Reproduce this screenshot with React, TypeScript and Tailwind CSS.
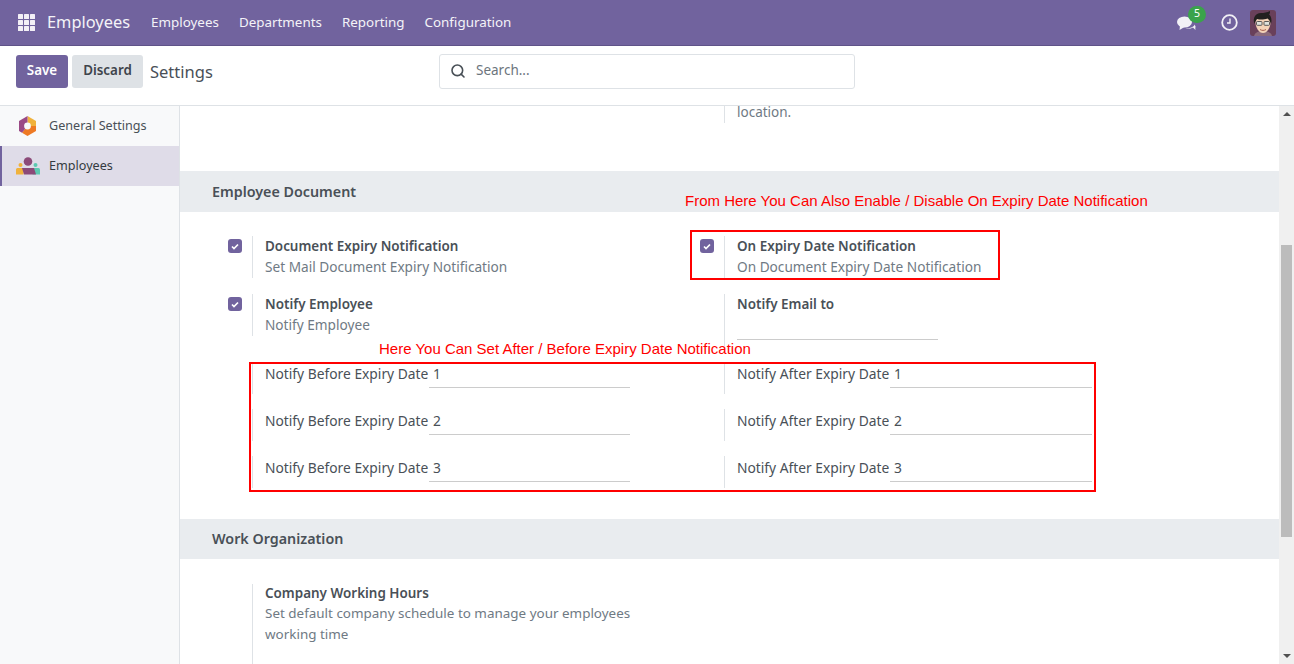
import { Search } from "lucide-react";

const font = "font-['Noto_Sans',sans-serif]";

function AppsIcon() {
  const cells = [0, 6, 12];
  return (
    <svg width="18" height="18" viewBox="0 0 18 18" className="fill-[#f3f0f6]">
      {cells.map((y) =>
        cells.map((x) => <rect key={`${x}-${y}`} x={x} y={y} width="5" height="5" rx="0.5" />)
      )}
    </svg>
  );
}

function ChatIcon() {
  return (
    <svg width="20" height="16" viewBox="0 0 20 16" className="fill-[#f2f1f6]">
      <ellipse cx="7.500" cy="6" rx="7.500" ry="5.500" />
      <path d="M3 9.500L2.500 14l5-3z" />
      <path d="M8.500 12.500c3 .5 5.500.2 7.500-1l2.500 2.500-.3-2.800H19c-.5-.500-1-1.200-1-2.700-1.500 2.500-5 4-9.500 4z" />
    </svg>
  );
}

function ClockIcon() {
  return (
    <svg width="17" height="17" viewBox="0 0 17 17" fill="none" className="stroke-[#f2f1f6]">
      <circle cx="8.500" cy="8.500" r="7.300" strokeWidth="1.800" />
      <path d="M9 4.500v4.500H6" strokeWidth="1.400" />
    </svg>
  );
}

function Avatar() {
  return (
    <svg width="26" height="26" viewBox="0 0 26 26" className="rounded-[3px]">
      <rect width="26" height="26" fill="#69405a" />
      <path d="M4 26c1-4 5-5 9-5s8 1 9 5z" fill="#8b6a7c" />
      <path d="M5.500 12c0-4 3-6 7.500-6s7.500 2 7.500 6c0 6-3.500 11-7.500 11s-7.500-5-7.500-11z" fill="#f4d3b8" />
      <path d="M4.500 14C2.500 8 5 3.500 11 3c3 0 6-.5 9-2 0 1.500 0 2.500-1 3.500 2.500 2 3 6 2 9.500-.5-2-1.500-4-3.500-5.500-3 1-7 1.500-10.500.5-1 1.500-2 3-2.500 5z" fill="#22201f" />
      <rect x="6.500" y="11.500" width="5.500" height="3.800" rx="0.800" fill="#dfe2dc" stroke="#4a4a4a" strokeWidth="0.900" />
      <rect x="14" y="11.500" width="5.500" height="3.800" rx="0.800" fill="#dfe2dc" stroke="#4a4a4a" strokeWidth="0.900" />
      <path d="M10 19.500c2 1.200 4 1.200 6 0" fill="none" stroke="#a8604e" strokeWidth="1" />
    </svg>
  );
}

function GeneralIcon() {
  return (
    <svg width="19" height="20" viewBox="0 0 19 20">
      <path d="M9.500 0l8.500 5v5H9.500z" fill="#f0b23c" />
      <path d="M18 10v5l-8.500 5L4 16.800 9.500 10z" fill="#ee7a24" />
      <path d="M9.500 0L1 5v10l3 1.800L9.500 10z" fill="#9a4a85" />
      <circle cx="9.500" cy="10" r="3.400" fill="#f8f9fa" />
    </svg>
  );
}

function EmployeesIcon() {
  return (
    <svg width="24" height="18" viewBox="0 0 24 18">
      <circle cx="4.500" cy="8" r="2" fill="#f0b23c" />
      <circle cx="19.500" cy="8" r="2" fill="#5cc9b0" />
      <path d="M1.500 11h6v6.500H0V12.500A1.500 1.500 0 0 1 1.500 11z" fill="#f0b23c" />
      <path d="M22.500 11h-6v6.500H24V12.500A1.500 1.500 0 0 0 22.500 11z" fill="#5cc9b0" />
      <circle cx="12" cy="4.500" r="4.300" fill="#8c4a78" />
      <path d="M6 11h12l2 6.500H8z" fill="#8c4a78" />
    </svg>
  );
}

function Check() {
  return (
    <span className="flex h-[14px] w-[14px] items-center justify-center rounded-[3px] bg-[#71639e]">
      <svg width="8" height="7" viewBox="0 0 8 7" fill="none" className="stroke-white">
        <path d="M1 3.500l2 2 4-4" strokeWidth="1.700" />
      </svg>
    </span>
  );
}

function Setting({
  checked,
  title,
  sub,
  tall,
  children,
}: {
  checked?: boolean;
  title: string;
  sub?: string;
  tall?: boolean;
  children?: React.ReactNode;
}) {
  return (
    <div className={tall ? "flex h-[52px]" : "flex h-[42px]"}>
      <div className="flex w-[72px] shrink-0 justify-end pr-[10px] pt-[3px]">{checked && <Check />}</div>
      <div className="flex-1 border-l border-[#dee2e6] pl-3">
        <div className="text-[13.45px] font-semibold leading-[20px] text-[#495057]">{title}</div>
        {sub && <div className="text-[13.65px] leading-[22px] text-[#6f7a84]">{sub}</div>}
        {children}
      </div>
    </div>
  );
}

function DateField({ label, n, labelWidth, width }: { label: string; n: number; labelWidth: string; width: string }) {
  return (
    <div className="flex h-[32px]">
      <div className="w-[72px] shrink-0" />
      <div className="flex flex-1 border-l border-[#dee2e6] pl-3 text-[13.8px] text-[#495057]">
        <span className={`${labelWidth} leading-[24px]`}>{label}</span>
        <span className={`${width} h-[26px] border-b border-[#ccc] pl-1 leading-[24px]`}>{n}</span>
      </div>
    </div>
  );
}

function SectionHeader({ short, children }: { short?: boolean; children: React.ReactNode }) {
  return (
    <div
      className={`${short ? "h-[40px]" : "h-[41px]"} flex items-center bg-[#e9ecef] pl-8 text-[14.3px] font-semibold text-[#495057]`}
    >
      {children}
    </div>
  );
}

export default function App() {
  return (
    <div className={`${font} flex h-[664px] w-[1294px] flex-col overflow-hidden bg-white`}>
      <header className="flex h-[46px] shrink-0 items-center border-b border-[#5f5388] bg-[#71639e] pl-[18px] text-[#f4f3f8]">
        <AppsIcon />
        <span className="ml-[11px] text-[16.4px]">Employees</span>
        <nav className="ml-[21px] flex gap-5 text-[13.4px]">
          <span>Employees</span>
          <span>Departments</span>
          <span>Reporting</span>
          <span>Configuration</span>
        </nav>
        <div className="relative ml-auto flex items-center pr-[18px]">
          <span className="mt-[3px]">
            <ChatIcon />
          </span>
          <span className="absolute left-[11px] top-[-4px] flex h-[17px] w-[18px] items-center justify-center rounded-full bg-[#3aa34b] text-[10.5px] text-white">
            5
          </span>
          <span className="ml-[24px] mr-[12px] flex">
            <ClockIcon />
          </span>
          <Avatar />
        </div>
      </header>

      <div className="flex h-[60px] shrink-0 items-start border-b border-[#dee2e6] pl-4 pt-[9px]">
        <button className="h-[33px] w-[52px] rounded-[3px] bg-[#71639e] pb-[2px] text-[13.4px] font-semibold text-white">Save</button>
        <button className="ml-1 h-[33px] w-[71px] rounded-[3px] bg-[#dee2e6] pb-[2px] text-[13.4px] font-semibold text-[#3e444b]">Discard</button>
        <span className="ml-[7px] w-[289px] text-[16.5px] leading-[33px] text-[#495057]">Settings</span>
        <div className="-mt-px flex h-[35px] w-[416px] items-center rounded-[3px] border border-[#dee2e6] pb-[2px] pl-[10px] text-[13.5px] text-[#6c757d]">
          <Search size={16} strokeWidth={2.4} className="text-[#495057]" />
          <span className="ml-[10px]">Search...</span>
        </div>
      </div>

      <div className="flex min-h-0 flex-1">
        <aside className="w-[180px] shrink-0 border-r border-[#dee2e6] bg-[#f8f9fa] text-[12.6px] text-[#495057]">
          <div className="flex h-[40px] items-center pl-[18px]">
            <GeneralIcon />
            <span className="ml-3 pt-px">General Settings</span>
          </div>
          <div className="flex h-[40px] items-center border-l-2 border-[#71639e] bg-[#dfdce8] pl-[14px] text-[#343a40]">
            <EmployeesIcon />
            <span className="ml-[9px] pt-px">Employees</span>
          </div>
        </aside>

        <main className="relative min-w-0 flex-1 overflow-hidden">
          <div className="flex h-[65px] items-start">
            <div className="ml-[544px] h-[17px] border-l border-[#dee2e6] pl-3 text-[13.5px] leading-[13px] text-[#6f7a84]">
              location.
            </div>
          </div>

          <SectionHeader>Employee Document</SectionHeader>

          <div className="grid grid-cols-[472px_472px] items-start pt-6">
            <Setting checked title="Document Expiry Notification" sub="Set Mail Document Expiry Notification" />
            <Setting checked title="On Expiry Date Notification" sub="On Document Expiry Date Notification" />
            <div className="mt-4">
              <Setting checked title="Notify Employee" sub="Notify Employee" />
            </div>
            <div className="mt-4">
              <Setting tall title="Notify Email to">
                <div className="mt-4 h-[10px] w-[201px] border-b border-[#ccc]" />
              </Setting>
            </div>
          </div>

          <div className="-mt-[10px] grid grid-cols-[472px_472px] gap-y-[15px] pt-[26px]">
            {[1, 2, 3].map((n) => (
              <DateField key={`b${n}`} label="Notify Before Expiry Date" n={n} labelWidth="w-[164px]" width="w-[201px]" />
            )).flatMap((el, i) => [
              el,
              <DateField key={`a${i}`} label="Notify After Expiry Date" n={i + 1} labelWidth="w-[153px]" width="w-[202px]" />,
            ])}
          </div>

          <div className="mt-[31px]">
            <SectionHeader short>Work Organization</SectionHeader>
          </div>

          <div className="flex pt-[25px]">
            <div className="w-[72px] shrink-0" />
            <div className="h-[90px] w-[400px] border-l border-[#dee2e6] pl-3">
              <div className="text-[13.45px] font-semibold leading-[19px] text-[#495057]">Company Working Hours</div>
              <div className="text-[13.45px] leading-[21px] text-[#6f7a84]">
                Set default company schedule to manage your employees working time
              </div>
            </div>
          </div>

          {/* red annotations drawn over the settings */}
          <div className="absolute left-[505px] top-[85px] whitespace-nowrap font-['Liberation_Sans',sans-serif] text-[15px] leading-[20px] text-[#f00]">
            From Here You Can Also Enable / Disable On Expiry Date Notification
          </div>
          <div className="absolute left-[510px] top-[124px] h-[50px] w-[310px] border-2 border-[#f00]" />
          <div className="absolute left-[199px] top-[233px] whitespace-nowrap font-['Liberation_Sans',sans-serif] text-[15px] leading-[20px] text-[#f00]">
            Here You Can Set After / Before Expiry Date Notification
          </div>
          <div className="absolute left-[69px] top-[256px] h-[130px] w-[847px] border-2 border-[#f00]" />
        </main>

        <div className="flex w-[15px] shrink-0 flex-col items-center bg-[#f0f0f0]">
          <span className="mt-[6px] h-0 w-0 border-x-[4px] border-b-[4px] border-x-transparent border-b-[#505050]" />
          <span className="mt-[129px] h-[292px] w-[11px] bg-[#bcbcbc]" />
          <span className="mt-auto mb-[6px] h-0 w-0 border-x-[4px] border-t-[4px] border-x-transparent border-t-[#505050]" />
        </div>
      </div>
    </div>
  );
}
